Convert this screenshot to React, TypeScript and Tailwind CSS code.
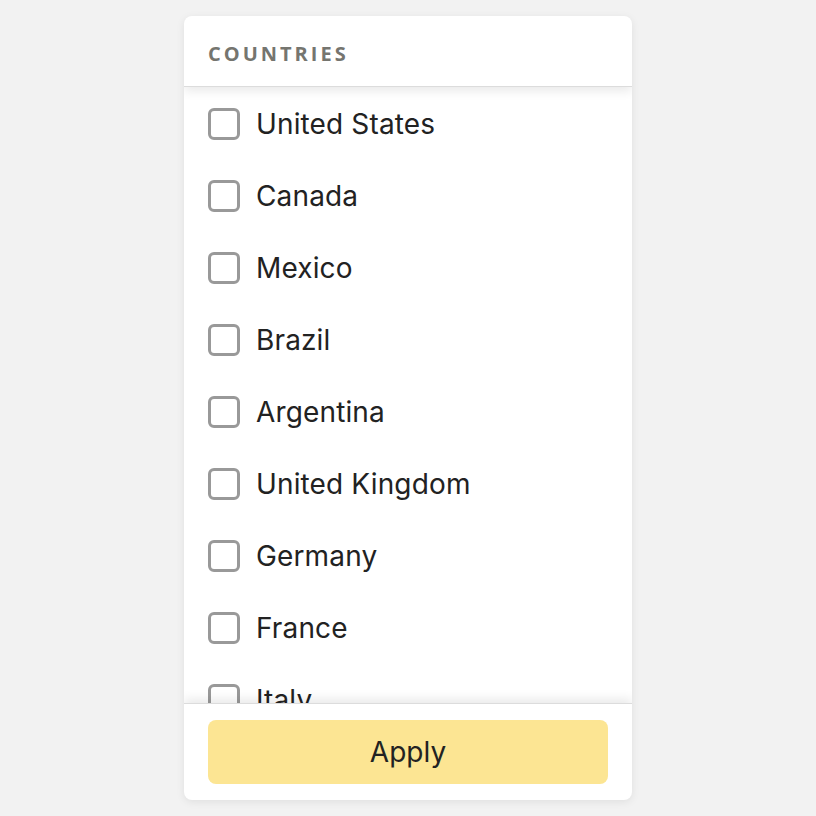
const countries = [
  "United States",
  "Canada",
  "Mexico",
  "Brazil",
  "Argentina",
  "United Kingdom",
  "Germany",
  "France",
  "Italy",
  "Spain",
  "Japan",
];

export default function App() {
  return (
    <div className="flex h-[816px] w-full justify-center bg-[#f2f2f2] pt-4 font-['Inter',sans-serif]">
      <div className="flex h-[784px] w-[448px] flex-col overflow-hidden rounded-lg bg-white shadow-[0_2px_8px_rgba(0,0,0,0.08)]">
        {/* header */}
        <div className="relative z-10 flex h-[71px] shrink-0 items-center border-b border-[#dcdcdc] px-6 pt-[6px] shadow-[0_4px_10px_rgba(0,0,0,0.09)]">
          <h2 className="font-['Open_Sans',sans-serif] text-[20px] font-bold tracking-[0.15em] text-[#75756f]">
            COUNTRIES
          </h2>
        </div>

        {/* list */}
        <ul className="min-h-0 flex-1 overflow-hidden pt-px">
          {countries.map((c) => (
            <li key={c} className="flex h-[72px] items-center gap-4 px-6">
              <span className="h-8 w-8 shrink-0 rounded-md border-[3px] border-[#999999]" />
              <span className="text-[28px] leading-none tracking-[0.005em] text-[#222222]">{c}</span>
            </li>
          ))}
        </ul>

        {/* footer */}
        <div className="relative z-10 shrink-0 border-t border-[#dcdcdc] px-6 py-4 shadow-[0_-4px_10px_rgba(0,0,0,0.09)]">
          <button className="flex h-16 w-full items-center justify-center rounded-lg bg-[#fce593] text-[28px] text-[#222222]">
            Apply
          </button>
        </div>
      </div>
    </div>
  );
}
